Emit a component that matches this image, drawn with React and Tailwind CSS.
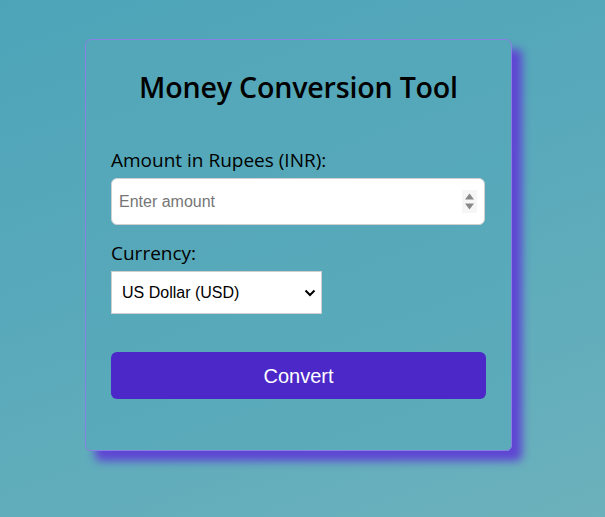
import React from "react";

export default function App() {
  return (
    <div className="min-h-[517px] w-full bg-[linear-gradient(160deg,#4da4b8_0%,#5aaabb_50%,#6cb1bc_100%)] pt-[39px] pl-[85px]">
      <div className="w-[427px] h-[412px] rounded-[6px] border border-[#8a7fe2] bg-[#55a8b9]/60 shadow-[10px_10px_9px_#5f46d3] px-[25px] pt-[29px]" style={{ fontFamily: '"Open Sans", "Noto Sans", sans-serif' }}>
        <h1 className="text-center text-[28.6px] leading-[36px] font-semibold text-black tracking-[-0.2px]">Money Conversion Tool</h1>
        <label className="block mt-[43px] text-[19px] leading-[24px] text-black">Amount in Rupees (INR):</label>
        <div className="relative mt-[6px]">
          <input
            type="text"
            placeholder="Enter amount"
            className="block w-[374px] h-[47px] rounded-[6px] border border-[#d0d0d0] bg-white px-[7px] text-[16px] text-black placeholder:text-[#767676] outline-none"
            style={{ fontFamily: '"Liberation Sans", Arial, sans-serif' }}
          />
          <div className="absolute right-[9px] top-[12px] w-[15px] h-[23px] bg-[#f6f6f6] flex items-center justify-center">
            <svg width="11" height="21" viewBox="0 0 11 21">
              <path d="M1 8.5 L5.5 2.5 L10 8.5 Z" fill="#888" />
              <path d="M1 12.5 L5.5 18.5 L10 12.5 Z" fill="#888" />
            </svg>
          </div>
        </div>
        <label className="block mt-[16px] text-[19px] leading-[24px] text-black">Currency:</label>
        <div className="relative mt-[6px] w-[211px]">
          <select
            className="block w-[211px] h-[43px] appearance-none border border-[#cfcfcf] bg-white pl-[10px] text-[16px] text-black outline-none"
            style={{ fontFamily: '"Liberation Sans", Arial, sans-serif' }}
            defaultValue="USD"
          >
            <option value="USD">US Dollar (USD)</option>
            <option value="EUR">Euro (EUR)</option>
          </select>
          <svg className="pointer-events-none absolute right-[6px] top-[17px]" width="12" height="10" viewBox="0 0 12 10">
            <path d="M1.5 2.5 L6 7 L10.5 2.5" fill="none" stroke="#000" strokeWidth="2" />
          </svg>
        </div>
        <button
          className="mt-[38px] block w-[375px] h-[47px] rounded-[6px] bg-[#4c28c8] text-white text-[20px]"
          style={{ fontFamily: '"Liberation Sans", Arial, sans-serif' }}
        >
          Convert
        </button>
      </div>
    </div>
  );
}
